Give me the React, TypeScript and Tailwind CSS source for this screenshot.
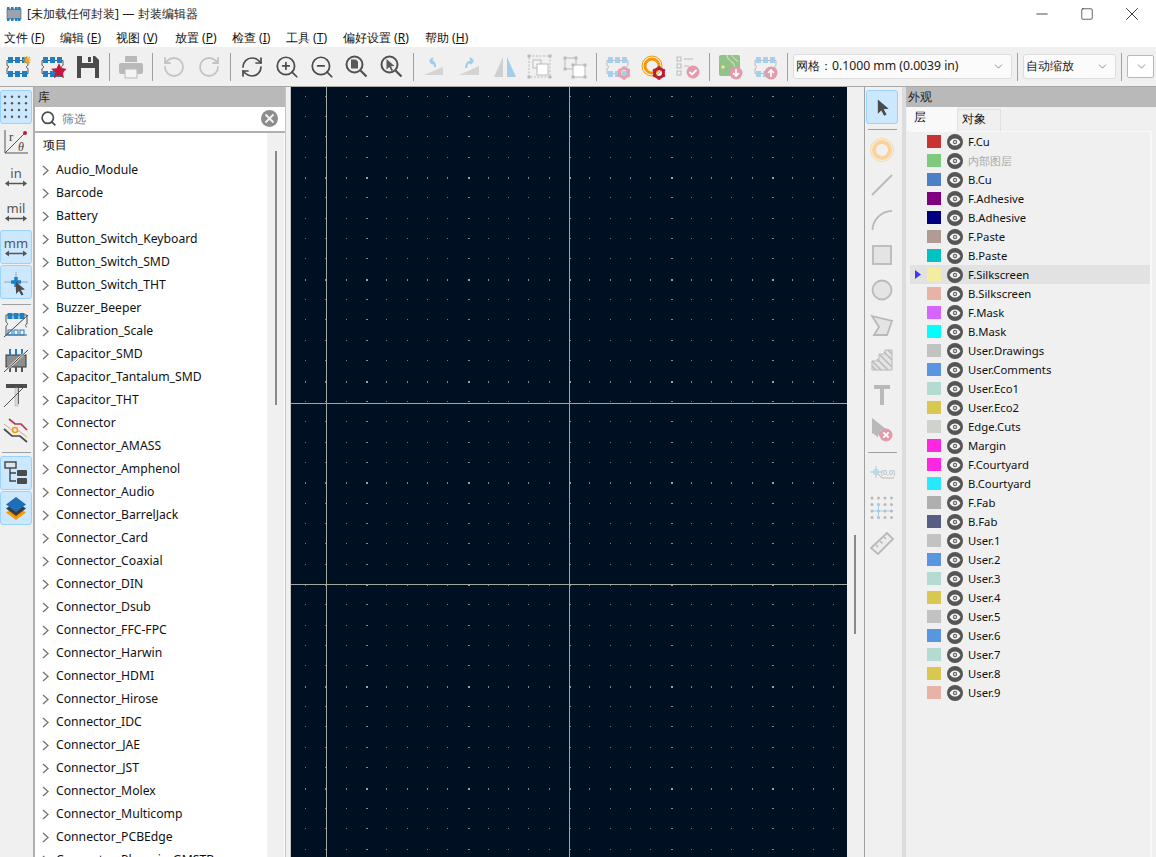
import React from "react";
import { RefreshCw, ZoomIn, ZoomOut, RotateCcw, RotateCw, Minus, Square, X, ChevronDown, Search } from "lucide-react";

const FONT = "[font-family:'Noto_Sans','Noto_Sans_CJK_SC',sans-serif]";

const Svg = ({ children, size = 26 }: { children: React.ReactNode; size?: number }) => (
  <svg width={size} height={size} viewBox="0 0 26 26" fill="none">{children}</svg>
);

const Fp = ({ pad = "#1e7fc6", line = "#555" }: { pad?: string; line?: string }) => (
  <>
    <path d="M2 6.5h21v5c-2 0-2 3 0 3v5H2v-5c2 0 2-3 0-3z" stroke={line} strokeWidth="1" fill="none" />
    {[3, 10, 17].map((x) => (
      <g key={x}>
        <rect x={x} y="3" width="5" height="6" fill={pad} />
        <rect x={x} y="17" width="5" height="6" fill={pad} />
      </g>
    ))}
  </>
);

const Gear = ({ c = "#e8a0b0", x = 19, y = 19, r = 6 }: { c?: string; x?: number; y?: number; r?: number }) => (
  <g>
    <circle cx={x} cy={y} r={r * 0.75} fill="none" stroke={c} strokeWidth={r * 0.5} />
    {[0, 60, 120, 180, 240, 300].map((a) => (
      <rect key={a} x={x - 1.3} y={y - r - 0.8} width="2.6" height="3" fill={c} transform={`rotate(${a} ${x} ${y})`} />
    ))}
  </g>
);

const Badge = ({ c = "#e39aac", x = 19, y = 19, kind }: { c?: string; x?: number; y?: number; kind: "down" | "up" | "check" | "x" }) => (
  <g>
    <circle cx={x} cy={y} r="6.5" fill={c} />
    {kind === "down" && <path d={`M${x} ${y - 4}v7m-3-3l3 3 3-3`} stroke="#fff" strokeWidth="1.7" />}
    {kind === "up" && <path d={`M${x} ${y + 4}v-7m-3 3l3-3 3 3`} stroke="#fff" strokeWidth="1.7" />}
    {kind === "check" && <path d={`M${x - 3.5} ${y}l2.5 2.5 4.5-4.5`} stroke="#fff" strokeWidth="1.8" />}
    {kind === "x" && <path d={`M${x - 2.7} ${y - 2.7}l5.4 5.4m0-5.4l-5.4 5.4`} stroke="#fff" strokeWidth="1.9" />}
  </g>
);

const Magnifier = ({ children }: { children?: React.ReactNode }) => (
  <Svg>
    <circle cx="10.500" cy="10.500" r="8" stroke="#505050" strokeWidth="2" />
    <path d="M16.500 16.500l6 6" stroke="#505050" strokeWidth="2.200" />
    {children}
  </Svg>
);

const Sep = () => (
  <div className="w-[8px] h-full flex justify-center items-center shrink-0">
    <div className="w-px h-[28px] bg-[#a0a0a0]" />
  </div>
);

const TB = ({ children }: { children: React.ReactNode }) => (
  <div className="w-[35px] h-full flex items-center justify-center shrink-0">{children}</div>
);

const Combo = ({ w, children }: { w: string; children?: React.ReactNode }) => (
  <div className={`${w} h-[25px] bg-[#fbfbfb] border border-[#dcdcdc] rounded-[3px] flex items-center pl-[2px] pr-[6px] text-[12.2px] text-[#1a1a1a] shrink-0`}>
    <span className="flex-1 whitespace-nowrap">{children}</span>
    <ChevronDown size={13} strokeWidth={1.2} color="#555" />
  </div>
);

const menus: [string, string][] = [
  ["文件", "F"], ["编辑", "E"], ["视图", "V"], ["放置", "P"], ["检查", "I"], ["工具", "T"], ["偏好设置", "R"], ["帮助", "H"],
];
const menuW = ["w-[56px]", "w-[56px]", "w-[59px]", "w-[57px]", "w-[54px]", "w-[57px]", "w-[82px]", "w-[60px]"];

const libs = ["Audio_Module","Barcode","Battery","Button_Switch_Keyboard","Button_Switch_SMD","Button_Switch_THT","Buzzer_Beeper","Calibration_Scale","Capacitor_SMD","Capacitor_Tantalum_SMD","Capacitor_THT","Connector","Connector_AMASS","Connector_Amphenol","Connector_Audio","Connector_BarrelJack","Connector_Card","Connector_Coaxial","Connector_DIN","Connector_Dsub","Connector_FFC-FPC","Connector_Harwin","Connector_HDMI","Connector_Hirose","Connector_IDC","Connector_JAE","Connector_JST","Connector_Molex","Connector_Multicomp","Connector_PCBEdge","Connector_Phoenix_GMSTB"];

const layers: [string, string][] = [
  ["F.Cu","#c83232"],["内部图层","#7fc97f"],["B.Cu","#4d7fc4"],["F.Adhesive","#800080"],["B.Adhesive","#000080"],["F.Paste","#b19c95"],["B.Paste","#00c2c2"],["F.Silkscreen","#f2eda1"],["B.Silkscreen","#e8b2a7"],["F.Mask","#d864ff"],["B.Mask","#00ffff"],["User.Drawings","#c2c2c2"],["User.Comments","#5996e0"],["User.Eco1","#b4dbd2"],["User.Eco2","#d8c852"],["Edge.Cuts","#d0d2cd"],["Margin","#ff26e2"],["F.Courtyard","#ff26e2"],["B.Courtyard","#26e9ff"],["F.Fab","#afafaf"],["B.Fab","#585d84"],["User.1","#c2c2c2"],["User.2","#5996e0"],["User.3","#b4dbd2"],["User.4","#d8c852"],["User.5","#c2c2c2"],["User.6","#5996e0"],["User.7","#b4dbd2"],["User.8","#d8c852"],["User.9","#e8b2a7"],
];

const Eye = () => (
  <svg width="16" height="16" viewBox="0 0 16 16" className="shrink-0">
    <circle cx="8" cy="8" r="8" fill="#555" />
    <path d="M2.5 8c1.5-2.6 3.4-3.6 5.5-3.6S12 5.400 13.500 8C12 10.600 10.100 11.600 8 11.600S4 10.600 2.500 8z" fill="#f5f5f5" />
    <circle cx="8" cy="8" r="2.200" fill="#666" />
    <circle cx="8" cy="8" r="1" fill="#f5f5f5" />
  </svg>
);

const Side = ({ active, children }: { active?: boolean; children: React.ReactNode }) => (
  <div className={`w-[32px] h-[34px] mb-px flex items-center justify-center rounded-[3px] border ${active ? "bg-[#cce8ff] border-[#99d1ff]" : "border-transparent"}`}>
    {children}
  </div>
);

const HSep = () => (
  <div className="h-[8px] w-[32px] flex items-center justify-center">
    <div className="h-px w-[29px] bg-[#a0a0a0]" />
  </div>
);

const Unit = ({ u }: { u: string }) => (
  <div className="flex flex-col items-center text-[#555]">
    <span className="text-[13px] leading-[13px]">{u}</span>
    <svg width="22" height="7" viewBox="0 0 22 7"><path d="M1 3.500h20" stroke="#555" strokeWidth="1.500" /><path d="M0 3.500l4-3v6zM22 3.500l-4-3v6z" fill="#555" /></svg>
  </div>
);

const G = "#b9b9b9";

const cols = Array.from({ length: 29 }, (_, i) => i);
const rows = Array.from({ length: 39 }, (_, i) => i);

export default function App() {
  return (
    <div className={`${FONT} w-[1156px] h-[857px] overflow-hidden flex flex-col bg-[#f0f0f0] text-[12px] text-black leading-none`}>
      {/* title bar */}
      <div className="h-[28px] bg-white flex items-center shrink-0">
        <svg width="16" height="16" viewBox="0 0 16 16" className="ml-[6px]">
          <rect x="1" y="3" width="14" height="10" fill="#9aa3ad" stroke="#555" strokeWidth="0.6" />
          {[1, 5, 9, 12].map((x) => (
            <g key={x}>
              <rect x={x} y="1" width="2.500" height="3" fill="#1e7fc6" />
              <rect x={x} y="12" width="2.500" height="3" fill="#1e7fc6" />
            </g>
          ))}
        </svg>
        <span className="ml-[5px] text-[12.2px] text-[#222]">[未加载任何封装] — 封装编辑器</span>
        <div className="flex-1" />
        <div className="w-[45px] flex justify-center"><Minus size={18} strokeWidth={1} color="#111" /></div>
        <div className="w-[45px] flex justify-center"><Square size={14} strokeWidth={1.100} color="#111" /></div>
        <div className="w-[45px] flex justify-center mr-[2px]"><X size={22} strokeWidth={0.900} color="#111" /></div>
      </div>
      {/* menu */}
      <div className="h-[19px] bg-white flex items-center pl-[4px] shrink-0">
        {menus.map(([m, k], i) => (
          <div key={m} className={`${menuW[i]} text-[12px] text-[#111] whitespace-nowrap`}>
            {m} (<span className="underline">{k}</span>)
          </div>
        ))}
      </div>
      {/* toolbar */}
      <div className="h-[39px] flex items-center shrink-0 bg-[#f0f0f0]">
        <TB><Svg><Fp /><path d="M22 2v8M18 6h8M19 3l6 6M25 3l-6 6" stroke="#f2a81d" strokeWidth="1.100" /></Svg></TB>
        <TB><Svg><Fp /><path d="M19 9l2.400 5.200 5.600.6-4.200 3.800 1.200 5.600-5-2.900-5 2.900 1.200-5.600-4.200-3.800 5.600-.6z" fill="#c2183c" /></Svg></TB>
        <TB>
          <Svg><path d="M2 2h18l4 4v18H2z" fill="#4b4b4b" /><rect x="7" y="2" width="11" height="7" fill="#f0f0f0" /><rect x="13" y="3" width="3" height="5" fill="#4b4b4b" /><rect x="6" y="14" width="14" height="10" fill="#f0f0f0" /></Svg>
        </TB>
        <Sep />
        <TB>
          <Svg><rect x="7" y="2" width="12" height="6" fill={G} /><rect x="1" y="9" width="24" height="11" rx="2" fill={G} /><rect x="7" y="15" width="12" height="9" fill="#f4f4f4" stroke={G} /></Svg>
        </TB>
        <Sep />
        <TB><RotateCcw size={24} strokeWidth={1.800} color="#c4c4c4" /></TB>
        <TB><RotateCw size={24} strokeWidth={1.800} color="#c4c4c4" /></TB>
        <Sep />
        <TB><RefreshCw size={24} strokeWidth={1.700} color="#4b4b4b" /></TB>
        <TB><ZoomIn size={26} strokeWidth={1.600} color="#4b4b4b" /></TB>
        <TB><ZoomOut size={26} strokeWidth={1.600} color="#4b4b4b" /></TB>
        <TB><Magnifier><path d="M7 5.500h5l2 2v7H7z" fill="#5a5a5a" /></Magnifier></TB>
        <TB><Magnifier><path d="M7.500 5l8 7-3.500.3 2 4-1.600.8-2-4-2.900 2.300z" fill="#5a5a5a" /></Magnifier></TB>
        <Sep />
        <TB><Svg><path d="M2 21l19-8v8z" fill="#d4d4d4" /><path d="M13 13c0-4-2-6-5-6m0 0l3-3m-3 3l3 3" stroke="#9ecdea" strokeWidth="2.200" /></Svg></TB>
        <TB><Svg><path d="M2 21l20-9v9z" fill="#d4d4d4" /><path d="M9 14c0-5 3-7 7-7m0 0l-3-3m3 3l-3 3" stroke="#9ecdea" strokeWidth="2.200" /></Svg></TB>
        <TB><Svg><path d="M11 3v20H2z" fill="#cfcfcf" /><path d="M15 3v20h9z" fill="#a3cde8" /></Svg></TB>
        <TB>
          <Svg>
            <rect x="2" y="2" width="21" height="21" stroke={G} strokeDasharray="2 1.500" />
            {[[2, 2], [23, 2], [2, 23], [23, 23]].map(([x, y]) => <rect key={`${x}${y}`} x={x - 1.500} y={y - 1.500} width="3" height="3" fill={G} />)}
            <rect x="6" y="6" width="8" height="8" fill="#f4f4f4" stroke={G} />
            <rect x="10" y="10" width="11" height="11" fill="#fff" stroke={G} />
          </Svg>
        </TB>
        <TB>
          <Svg>
            <path d="M3 4h11v11H3z" stroke={G} />
            <rect x="11" y="11" width="12" height="12" fill="#fff" stroke={G} />
            {[[3, 4], [14, 4], [3, 15], [11, 11], [23, 11], [11, 23], [23, 23]].map(([x, y]) => <rect key={`${x}-${y}`} x={x - 1.500} y={y - 1.500} width="3" height="3" fill={G} />)}
          </Svg>
        </TB>
        <Sep />
        <TB><Svg><Fp pad="#a5cfea" line={G} /><Gear c="#e8a0b0" /></Svg></TB>
        <TB>
          <Svg>
            <circle cx="12" cy="12" r="10" stroke="#f49a0a" strokeWidth="1" />
            <circle cx="12" cy="12" r="7" stroke="#f49a0a" strokeWidth="3" />
            <Gear c="#b51d38" x={19} y={19} r={6} />
          </Svg>
        </TB>
        <TB>
          <Svg>
            {[3, 10, 17].map((y) => <rect key={y} x="2" y={y} width="4" height="4" stroke={G} />)}
            <path d="M9 5h9M9 12h5" stroke={G} />
            <Badge x={18} y={18} kind="check" />
          </Svg>
        </TB>
        <Sep />
        <TB>
          <Svg>
            <rect x="1" y="1" width="21" height="21" rx="2" fill="#93c288" />
            <path d="M9 1c0 6 6 5 7 10s6 4 6 4M14 1c0 4 5 4 6 7" stroke="#c8dfb4" strokeWidth="1.200" />
            <circle cx="5" cy="13" r="1.800" fill="#f2e29a" />
            <Badge x={18} y={19} kind="down" />
          </Svg>
        </TB>
        <TB><Svg><Fp pad="#a5cfea" line={G} /><Badge x={18} y={19} kind="up" /></Svg></TB>
        <Sep />
        <div className="w-[2px] shrink-0" />
        <Combo w="w-[219px]">网格：0.1000 mm (0.0039 in)</Combo>
        <div className="w-[1px] shrink-0" />
        <Sep />
        <div className="w-[2px] shrink-0" />
        <Combo w="w-[93px]">自动缩放</Combo>
        <div className="w-[1px] shrink-0" />
        <Sep />
        <div className="w-[2px] shrink-0" />
        <div className="w-[27px] h-[23px] bg-white border border-[#b8b8b8] rounded-[2px] flex items-center justify-end pr-[5px] shrink-0">
          <ChevronDown size={13} strokeWidth={1.200} color="#555" />
        </div>
      </div>
      {/* main */}
      <div className="flex-1 flex min-h-0 border-t border-[#a8a8a8]">
        {/* left toolbar */}
        <div className="w-[35px] shrink-0 border-r-2 border-[#b0b0b0] pt-[3px] flex flex-col items-start">
          <Side active>
            <svg width="28" height="28" viewBox="0 0 28 28" fill="#555">
              {[3.700, 10.300, 17, 23.700].flatMap((y) => [3, 10, 17, 24].map((x) => <circle key={`${x}-${y}`} cx={x} cy={y} r="1.200" />))}
            </svg>
          </Side>
          <Side>
            <svg width="28" height="28" viewBox="0 0 28 28" fill="none">
              <path d="M3 2v23h23" stroke="#555" strokeWidth="1" />
              <path d="M3 25L23 5" stroke="#555" />
              <circle cx="23" cy="5" r="2" fill="#c2183c" />
              <text x="7" y="13" fontSize="13" fill="#444" fontFamily="Liberation Serif">r</text>
              <text x="16" y="23" fontSize="12" fill="#444" fontStyle="italic" fontFamily="Liberation Serif">θ</text>
            </svg>
          </Side>
          {["in", "mil", "mm"].map((u) => (
            <Side key={u} active={u === "mm"}><Unit u={u} /></Side>
          ))}
          <Side active>
            <svg width="28" height="28" viewBox="0 0 28 28" fill="none">
              <path d="M2 14h24M14 4v18" stroke="#8a9aa6" strokeWidth="0.800" />
              <path d="M14 9v10M9 14h10" stroke="#1a80c8" strokeWidth="3.500" />
              <path d="M14 14l9 7.500-4 .4 2.500 4.500-2 1-2.500-4.500-3 3z" fill="#4b4b4b" />
            </svg>
          </Side>
          <HSep />
          <Side>
            <svg width="26" height="26" viewBox="0 0 26 26" fill="none">
              <path d="M3 3h21v9c-2 0 -2 3 0 3M3 3v7c2 1 2 3 0 4v9h21" stroke="#555" />
              {[7, 13, 19].map((x) => <rect key={x} x={x - 2.500} y="1" width="5" height="6" fill="#1e7fc6" />)}
              {[7, 13, 19].map((x) => <rect key={x} x={x - 2} y="18" width="4" height="5" stroke="#1e7fc6" />)}
              <path d="M1 25L25 3" stroke="#444" />
            </svg>
          </Side>
          <Side>
            <svg width="26" height="26" viewBox="0 0 26 26" fill="none">
              <rect x="3" y="8" width="20" height="12" fill="#8e8e8e" stroke="#333" />
              {[7, 13, 19].map((x) => <rect key={x} x={x - 1} y="2" width="2" height="6" fill="#1e7fc6" />)}
              {[7, 13, 19].map((x) => <rect key={x} x={x - 1} y="20" width="2" height="5" fill="#555" />)}
              <path d="M1 25L25 3" stroke="#fff" strokeWidth="2" />
              <path d="M1 25L25 3" stroke="#333" />
            </svg>
          </Side>
          <Side>
            <svg width="26" height="26" viewBox="0 0 26 26" fill="none">
              <path d="M3 2h21v4H16v16h-4V6H3z" fill="#4b4b4b" />
              <rect x="12" y="6" width="3" height="18" fill="#d8d8d8" stroke="#aaa" strokeWidth="0.500" />
              <path d="M1 25L24 2" stroke="#555" />
            </svg>
          </Side>
          <Side>
            <svg width="26" height="26" viewBox="0 0 26 26" fill="none">
              <path d="M6 2l6 5h6l6 6" stroke="#b8304a" strokeWidth="1.700" />
              <path d="M1 7l9 7h6l8 6" stroke="#c9a050" strokeWidth="0.800" />
              <path d="M1 12l8 7h8l7 6" stroke="#4b4b4b" strokeWidth="1.700" />
              <circle cx="12" cy="13" r="2.500" fill="#f0f0f0" stroke="#f49a0a" strokeWidth="1.500" />
            </svg>
          </Side>
          <HSep />
          <Side active>
            <svg width="26" height="26" viewBox="0 0 26 26" fill="none">
              <rect x="2" y="2" width="11" height="6" fill="#d8e4ee" stroke="#444" strokeWidth="1.400" />
              <path d="M7 8v13h6M7 13h6" stroke="#444" strokeWidth="1.400" />
              <rect x="14" y="10" width="10" height="6" rx="1" fill="#4b4b4b" />
              <rect x="14" y="18" width="10" height="6" rx="1" fill="#4b4b4b" />
            </svg>
          </Side>
          <Side active>
            <svg width="26" height="26" viewBox="0 0 26 26">
              <path d="M13 11l10 6.500L13 25 3 17.500z" fill="#f49a0a" />
              <path d="M13 7l10 6.500L13 21 3 13.500z" fill="#3b3b3b" />
              <path d="M13 2l10 7.500L13 17 3 9.500z" fill="#1c6fb8" />
            </svg>
          </Side>
        </div>
        {/* library panel */}
        <div className="w-[250px] shrink-0 flex flex-col min-h-0">
          <div className="h-[20px] bg-[#b9b9b9] flex items-center pl-[3px] text-[12px] text-[#222] shrink-0">库</div>
          <div className="h-[24px] bg-white flex items-center pl-[5px] pr-[7px] pb-px shrink-0">
            <Search size={17} strokeWidth={2.400} color="#4b4b4b" />
            <span className="ml-[5px] flex-1 text-[#777] text-[12px]">筛选</span>
            <svg width="17" height="17" viewBox="0 0 17 17"><circle cx="8.500" cy="8.500" r="8.500" fill="#8d8d8d" /><path d="M4.500 4.500l8 8m0-8l-8 8" stroke="#f4f4f4" strokeWidth="1.800" /></svg>
          </div>
          <div className="h-[2px] bg-[#b0b0b0] shrink-0" />
          <div className="flex-1 flex bg-white min-h-0 overflow-hidden">
            <div className="flex-1 min-w-0">
              <div className="h-[26px] flex items-center pl-[8px] pb-[2px] text-[12px] text-[#111]">项目</div>
              {libs.map((l) => (
                <div key={l} className="h-[23px] flex items-center pl-[7px] text-[12.2px] text-[#111] whitespace-nowrap">
                  <svg width="7" height="11" viewBox="0 0 7 11" fill="none" className="shrink-0"><path d="M1 1l5 4.500-5 4.500" stroke="#777" strokeWidth="1.400" /></svg>
                  <span className="ml-[7px]">{l}</span>
                </div>
              ))}
            </div>
            <div className="w-[17px] shrink-0 bg-[#f0f0f0] flex justify-center pt-[18px] mr-px">
              <div className="w-[2px] h-[254px] bg-[#8a8a8a]" />
            </div>
          </div>
        </div>
        <div className="w-[6px] shrink-0 bg-[#f0f0f0] border-l border-r border-[#c4c4c4]" />
        {/* canvas */}
        <div className="w-[556px] shrink-0 bg-[#001023] min-h-0 overflow-hidden">
          <svg width="556" height="770">
            {rows.map((r) => cols.map((c) => {
              const x = 278 - 14 * 20.300 + c * 20.300;
              const y = 497 - 24 * 20.350 + r * 20.350;
              const mc = (c - 14 + 500) % 5 === 0;
              const mr = (r - 24 + 500) % 5 === 0;
              return (
                <rect key={`${r}-${c}`} x={Math.round(x)} y={Math.round(y)} width={mc ? 2 : 1} height={mr ? 2 : 1} fill={mc && mr ? "#9aa2aa" : mc || mr ? "#7f8993" : "#6f7a85"} />
              );
            }))}
            <path d="M35.500 0V770M278.500 0V770M0 316.500H556M0 497.500H556" stroke="#a3a69c" strokeWidth="1" />
          </svg>
        </div>
        {/* canvas scroll strip */}
        <div className="w-[18px] shrink-0 border-r border-[#a0a0a0] pl-[7px] pt-[448px]">
          <div className="w-[2px] h-[99px] bg-[#8a8a8a]" />
        </div>
        {/* right toolbar */}
        <div className="w-[37px] shrink-0 pt-[3px] pl-[1px] flex flex-col items-start">
          <Side active>
            <svg width="20" height="20" viewBox="0 0 24 24"><path d="M7 3l13 11-6 .6 3.500 6.500-3 1.500-3.300-6.500L7 20z" fill="#4b4b4b" /></svg>
          </Side>
          <HSep />
          <Side><svg width="26" height="26" viewBox="0 0 26 26" fill="none"><circle cx="13" cy="13" r="11.500" stroke="#fbd8a6" /><circle cx="13" cy="13" r="8" stroke="#fbd29a" strokeWidth="4" /></svg></Side>
          <Side><svg width="26" height="26" viewBox="0 0 26 26"><path d="M3 23L23 3" stroke={G} strokeWidth="1.800" /></svg></Side>
          <Side><svg width="26" height="26" viewBox="0 0 26 26" fill="none"><path d="M3.500 23c0-10 9-19 19.500-19" stroke={G} strokeWidth="1.800" /></svg></Side>
          <Side><svg width="26" height="26" viewBox="0 0 26 26"><rect x="4" y="4" width="18" height="18" fill="#e4e4e4" stroke={G} strokeWidth="1.800" /></svg></Side>
          <Side><svg width="26" height="26" viewBox="0 0 26 26"><circle cx="13" cy="13" r="9.500" fill="#e4e4e4" stroke={G} strokeWidth="1.800" /></svg></Side>
          <Side><svg width="26" height="26" viewBox="0 0 26 26"><path d="M3 4l20 5-5 14H5l5-8z" fill="#e4e4e4" stroke={G} strokeWidth="1.800" /></svg></Side>
          <Side>
            <svg width="26" height="26" viewBox="0 0 26 26"><path d="M3 23V14h7V7h6V3h7v20z" fill="#e4e4e4" stroke={G} strokeWidth="1" /><path d="M3 19l4 4M3 14l9 9M8 12l11 11M11 8l12 12M15 5l8 8M19 3l4 4" stroke={G} strokeWidth="1.500" /></svg>
          </Side>
          <Side><svg width="26" height="26" viewBox="0 0 26 26"><path d="M5 3h16v4h-6v16h-4V7H5z" fill={G} /></svg></Side>
          <Side>
            <svg width="26" height="26" viewBox="0 0 26 26"><path d="M3 1l13 12-6 .4-1 7-6-5z" fill={G} /><path d="M3 1v16l4-4 4 7 3-1-3-7h6z" fill={G} /><Badge x={17} y={18} kind="x" /></svg>
          </Side>
          <HSep />
          <Side>
            <svg width="26" height="26" viewBox="0 0 26 26" fill="none">
              <circle cx="7" cy="12" r="2.500" stroke="#a5cfea" /><path d="M1 12h12M7 6v12" stroke="#a5cfea" />
              <path d="M9 14l4 4h12" stroke={G} />
              <text x="12" y="15" fontSize="7" fill="#b0b0b0" fontFamily="Noto Sans">(0,0)</text>
            </svg>
          </Side>
          <Side>
            <svg width="26" height="26" viewBox="0 0 26 26" fill={G}>
              {[3, 9.500, 16, 22.500].flatMap((y) => [2, 8.500, 15, 21.500].map((x) => <circle key={`${x}-${y}`} cx={x + 1} cy={y} r="1.500" />))}
              <path d="M3 16h19M9.500 9v14" stroke="#a5cfea" strokeWidth="1" />
            </svg>
          </Side>
          <Side>
            <svg width="26" height="26" viewBox="0 0 26 26" fill="none"><path d="M2 18L18 3l6 6L9 24z" stroke={G} strokeWidth="1.800" fill="#ececec" /><path d="M7 15l2 2M11 11l2.500 2.500M15 7l2 2" stroke={G} strokeWidth="1.500" /></svg>
          </Side>
        </div>
        <div className="w-[4px] shrink-0 bg-[#dcdcdc]" />
        {/* appearance */}
        <div className="flex-1 min-w-0 flex flex-col">
          <div className="h-[20px] bg-[#b9b9b9] flex items-center pl-[2px] text-[12px] text-[#222] shrink-0">外观</div>
          <div className="h-[24px] flex items-end pl-px shrink-0">
            <div className="w-[50px] h-[24px] bg-[#f9f9f9] flex items-center pl-[7px] pb-[4px] text-[12px] text-[#111]">层</div>
            <div className="w-[44px] h-[22px] bg-[#f0f0f0] border border-b-0 border-[#e0e0e0] flex items-center pl-[4px] pb-[3px] text-[12px] text-[#111]">对象</div>
          </div>
          <div className="flex-1 mx-[4px] border-t border-r-2 border-[#f8f8f8]">
            {layers.map(([n, c], i) => (
              <div key={n} className={`h-[19px] flex items-center ${n === "F.Silkscreen" ? "bg-[#e2e2e2]" : ""}`}>
                <div className="w-[17px] pl-[5px] shrink-0 flex items-center h-full">
                  {n === "F.Silkscreen" && <svg width="6" height="9" viewBox="0 0 6 9"><path d="M0 0l6 4.500L0 9z" fill="#3a3aff" /></svg>}
                </div>
                <div className="w-[14px] h-[13px] shrink-0" style={{ backgroundColor: c }} />
                <div className="ml-[6px]"><Eye /></div>
                <span className={`ml-[5px] text-[11.3px] whitespace-nowrap ${i === 1 ? "text-[#a8a8a8]" : "text-[#111]"}`}>{n}</span>
              </div>
            ))}
          </div>
        </div>
      </div>
    </div>
  );
}
